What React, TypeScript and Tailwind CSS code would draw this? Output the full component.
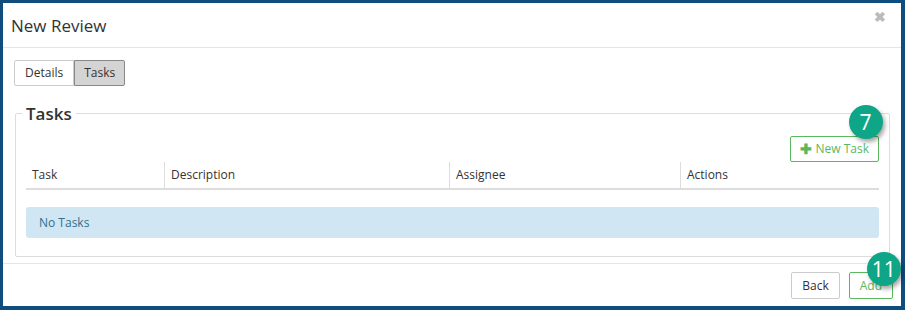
import React from "react";

const Badge = ({ n, className }: { n: string; className: string }) => (
  <div
    className={`absolute w-[34px] h-[34px] rounded-full bg-[#0fa688] text-white text-[21px] leading-none flex items-center justify-center shadow-[2px_3px_4px_rgba(0,0,0,0.35)] ${className}`}
  >
    {n}
  </div>
);

const App = () => {
  const cols = [
    { label: "Task", w: "w-[138px]" },
    { label: "Description", w: "w-[285px]" },
    { label: "Assignee", w: "w-[231px]" },
    { label: "Actions", w: "flex-1" },
  ];

  return (
    <div
      className="w-[905px] h-[310px] bg-[#0e4d7e] pt-[3px] pl-[3px] pr-[4px] pb-[4px] text-[#333]"
      style={{ fontFamily: '"Open Sans", "Liberation Sans", sans-serif' }}
    >
      <div className="w-full h-full bg-white flex flex-col">
        {/* header */}
        <div className="h-[45px] border-b border-[#e5e5e5] flex items-center justify-between pl-[8px] pr-[15px]">
          <div className="text-[17px] pt-[1px]">New Review</div>
          <div className="text-[#bbb] text-[14px] font-bold leading-none -mt-[17px]">✖</div>
        </div>

        {/* body */}
        <div className="h-[216px] border-b border-[#e5e5e5] px-[11px] pt-[12px]">
          <div className="flex text-[12px]">
            <div className="h-[26px] px-[10px] flex items-center border border-[#ccc] rounded-l-[2px] bg-white">
              Details
            </div>
            <div className="h-[26px] px-[9px] flex items-center border border-[#888] bg-[#d4d4d4] rounded-r-[2px]">
              Tasks
            </div>
          </div>

          <fieldset className="mt-[19px] ml-[1px] w-[875px] h-[152px] border border-[#ddd] px-[10px] rounded-[2px]">
            <legend className="px-[4px] -ml-[4px] text-[17px] font-semibold leading-[17px]">Tasks</legend>

            <div className="flex justify-end mt-[14px]">
              <div className="relative h-[26px] px-[9px] flex items-center gap-[4px] border border-[#5cb85c] rounded-[2px] text-[#5cb85c] text-[12px]">
                <span className="font-bold text-[14px] leading-none">✚</span>
                <span>New Task</span>
                <Badge n="7" className="left-[58px] -top-[32px]" />
              </div>
            </div>

            <div className="flex h-[28px] border-b-2 border-[#ddd] text-[12px] font-medium">
              {cols.map((c, i) => (
                <div
                  key={c.label}
                  className={`${c.w} flex items-center px-[6px] ${i > 0 ? "border-l border-[#ddd]" : ""}`}
                >
                  {c.label}
                </div>
              ))}
            </div>

            <div className="mt-[17px] h-[31px] bg-[#d0e6f3] rounded-[3px] flex items-center px-[13px] text-[12px] text-[#31708f]">
              No Tasks
            </div>
          </fieldset>
        </div>

        {/* footer */}
        <div className="flex-1 flex justify-end items-start gap-[9px] pt-[8px] pr-[8px] text-[12px]">
          <div className="h-[27px] px-[10px] flex items-center border border-[#ccc] rounded-[2px]">Back</div>
          <div className="relative h-[27px] px-[10px] flex items-center border border-[#5cb85c] rounded-[2px] text-[#5cb85c]">
            Add
            <Badge n="11" className="left-[17px] -top-[21px]" />
          </div>
        </div>
      </div>
    </div>
  );
};

export default App;
